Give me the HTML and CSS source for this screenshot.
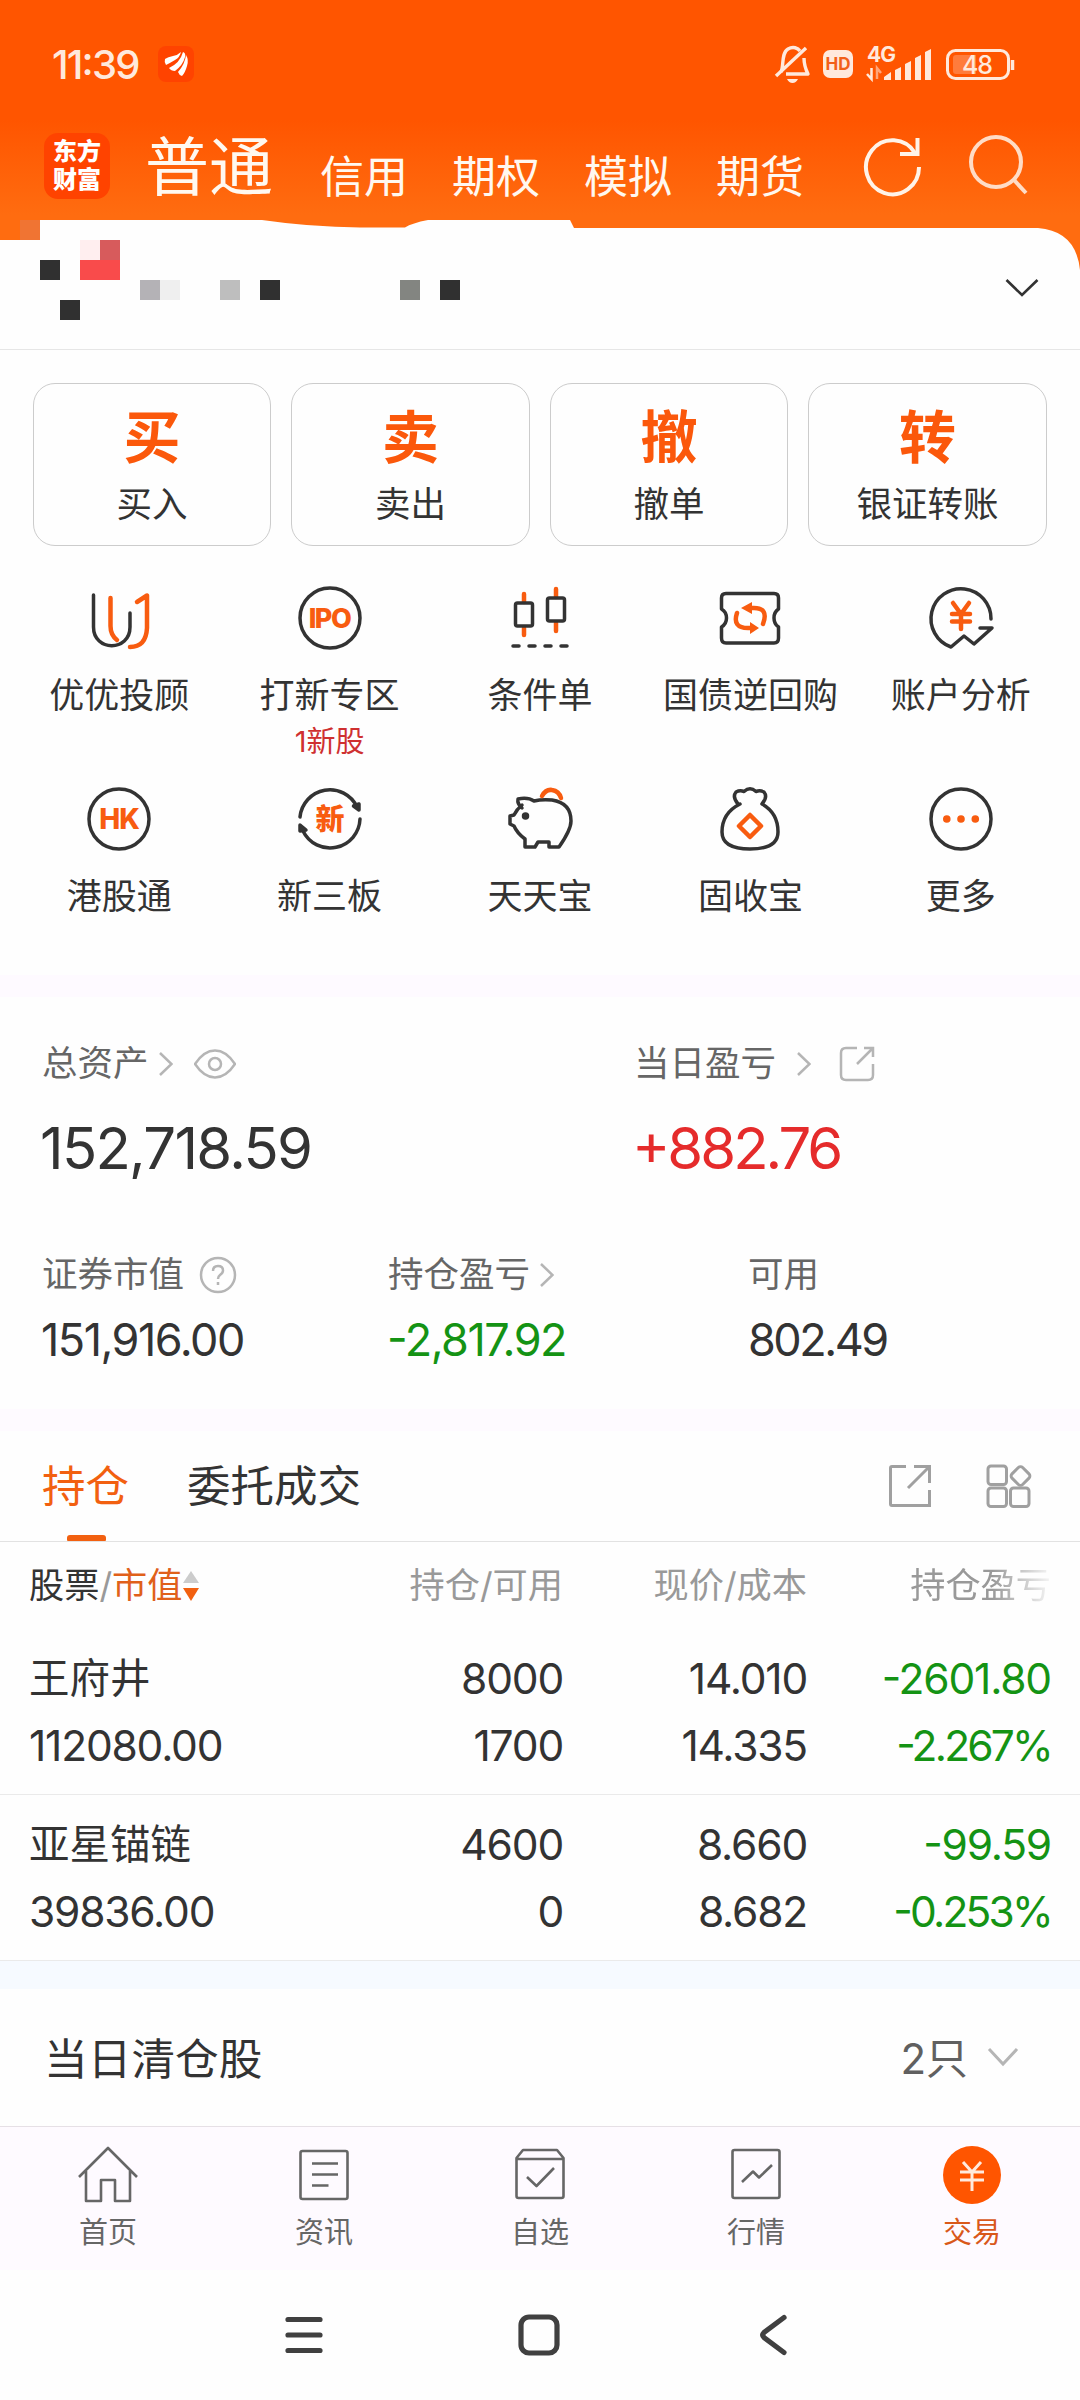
FILE: index.html
```html
<!DOCTYPE html>
<html lang="zh-CN">
<head>
    <meta charset="UTF-8">
    <meta name="viewport" content="width=device-width, initial-scale=1.0">
    <title>东方财富 - 交易</title>
    <link rel="stylesheet" href="styles.css">
</head>
<body>
    <div class="top">
        <div class="status-bar">
            <span class="time">11:39</span>
            <svg class="app-badge" width="36" height="36" viewBox="0 0 36 36">
                <rect width="36" height="36" rx="8" fill="#ff4300"/>
                <path d="M7 13 Q10 11 15 10 Q20 9 23 6 Q22 11 17 14 Q12 17 8 19 Q6 16 7 13Z M11 22 Q22 17 25 6 Q28 7 27 11 Q25 19 17 25 Q13 25 11 22Z M20 26 Q27 18 28 9 Q31 14 29 20 Q27 27 24 30 Q21 29 20 26Z" fill="#fff"/>
            </svg>
            <svg class="status-icons" width="242" height="52" viewBox="0 -6 242 52" fill="none" stroke="#ffe9dc" stroke-width="3.4">
                <path d="M7 28 C10 23 7 9 14 5 C19 2 24 4 26 7 M30 14 C30 21 31 24 34 30 H12" stroke-linejoin="round"/>
                <path d="M2 32 L32 4"/>
                <path d="M13 35 H24 Q22 39 18.500 39 Q15 39 13 35Z" fill="#ffe9dc" stroke="none"/>
                <rect x="49" y="6" width="30" height="28" rx="7" fill="#ffe9dc" stroke="none"/>
                <text x="64" y="26" class="hd">HD</text>
                <text x="93" y="18" class="net">4G</text>
                <path d="M97.500 24 V35 L93 30" stroke-width="2.500"/>
                <path d="M103 35 V24 L107 29" stroke="#ffa67a" stroke-width="2.500"/>
                <g fill="#ffe9dc" stroke="none">
                    <path d="M110 33 L117 28 V36 H110Z M121 26 L127 23 V36 H121Z M131 20 L137 17 V36 H131Z M141 14 L147 11 V36 H141Z M151 8 L157 5 V36 H151Z"/>
                </g>
                <rect x="173.500" y="6.500" width="61" height="28" rx="8" stroke-width="3"/>
                <path d="M182 11 H202 V30 H182 Q179 30 179 27 V14 Q179 11 182 11Z" fill="#ff7c3c" stroke="none"/>
                <path d="M238.500 16 V26" stroke-width="3.500"/>
                <text x="203" y="29.500" class="battery">48</text>
            </svg>
        </div>

        <div class="header">
            <div class="logo">东方<br>财富</div>
            <div class="account-tabs">
                <span class="active">普通</span>
                <span>信用</span>
                <span>期权</span>
                <span>模拟</span>
                <span>期货</span>
            </div>
            <svg width="60" height="64" viewBox="0 0 60 64" fill="none" stroke="#fff3e8" stroke-width="4">
                <path d="M52 20 A26.500 27 0 1 0 56 34"/>
                <path d="M37 21 H54.500 V5"/>
            </svg>
            <svg class="search" width="60" height="64" viewBox="0 0 60 64" fill="none" stroke="#ffdcc6" stroke-width="4">
                <circle cx="28" cy="29" r="25"/>
                <path d="M45.500 46.500 L58 60"/>
            </svg>
        </div>

        <!-- account row, name is masked with mosaic blocks -->
        <div class="account">
            <svg class="mask" width="1080" height="129" viewBox="0 0 1080 129">
                <path d="M0 20 H40 V0 H262 Q310 7 360 7.500 H405 Q412 3 428 0 H570 L574 8 H1038 Q1076 11 1080 50 V129 H0Z" fill="#fefefe"/>
                <rect x="20" y="0" width="20" height="20" fill="#f07433"/>
                <rect x="80" y="20" width="20" height="20" fill="#ffeeef"/>
                <rect x="100" y="20" width="20" height="20" fill="#d75b5c"/>
                <rect x="80" y="40" width="40" height="20" fill="#f94b4b"/>
                <rect x="140" y="60" width="20" height="20" fill="#b4b2b6"/>
                <rect x="160" y="60" width="20" height="20" fill="#efefef"/>
                <rect x="220" y="60" width="20" height="20" fill="#bebebe"/>
                <rect x="400" y="60" width="20" height="20" fill="#838581"/>
                <path d="M40 40h20v20h-20z M60 80h20v20h-20z M260 60h20v20h-20z M440 60h20v20h-20z" fill="#303030"/>
            </svg>
            <svg class="arrow" width="34" height="20" viewBox="0 0 34 20" fill="none" stroke="#333" stroke-width="2.600">
                <path d="M1.500 2 L17 17 L32.500 2"/>
            </svg>
        </div>
    </div>

    <div class="actions">
        <div class="action"><b>买</b><span>买入</span></div>
        <div class="action"><b>卖</b><span>卖出</span></div>
        <div class="action"><b>撤</b><span>撤单</span></div>
        <div class="action"><b>转</b><span>银证转账</span></div>
    </div>

    <div class="menu">
        <div class="item">
            <svg viewBox="0 0 64 64">
                <path d="M6.500 9 V41 C6.500 66 43 66 43 41 V27"/>
                <path class="o" d="M23.500 12 V40 Q23.500 49 30 54 M50 16 L60 9.500 V42 Q59 61 43 61"/>
            </svg>
            <span>优优投顾</span>
        </div>
        <div class="item">
            <svg viewBox="0 0 64 64">
                <circle cx="32" cy="32" r="30"/>
                <text x="31.500" y="42" class="ipo">IPO</text>
            </svg>
            <span>打新专区</span>
            <em>1新股</em>
        </div>
        <div class="item">
            <svg viewBox="0 0 64 64">
                <path class="o" d="M16 8 V16 M16 42 V49 M48 3 V11 M48 37 V45"/>
                <rect x="7.500" y="17" width="17" height="23" rx="2"/>
                <rect x="39.500" y="12" width="17" height="23" rx="2"/>
                <path d="M5 60 H11 M21 60 H27 M37 60 H43 M53 60 H59"/>
            </svg>
            <span>条件单</span>
        </div>
        <div class="item">
            <svg viewBox="0 0 64 64">
                <path d="M8 7.500 H56 Q60.500 7.500 60.500 12 V23 Q56 26 56 32 Q56 38 60.500 41 V52 Q60.500 57 56 57 H8 Q3.500 57 3.500 52 V41 Q8.500 38 8.500 32 Q8.500 26 3.500 23 V12 Q3.500 7.500 8 7.500Z"/>
                <path class="o" d="M19 27 Q14 42 30 42 H34 M45 38 Q51 22 36 22 H31"/>
                <path class="of" d="M23 22 L34 16 V28Z M41 42 L32 36 V48Z"/>
            </svg>
            <span>国债逆回购</span>
        </div>
        <div class="item">
            <svg viewBox="0 0 64 64">
                <path d="M62 33 A30 30 0 1 0 22 61 L35 50 L45 58 L63 42 H51"/>
                <path class="o" d="M24 17 L32 28 L40 17 M32 28 V43 M23 28 H41 M23 35.500 H41"/>
            </svg>
            <span>账户分析</span>
        </div>
        <div class="item">
            <svg viewBox="0 0 64 64">
                <circle cx="32" cy="32" r="30"/>
                <text x="32" y="42" class="hk">HK</text>
            </svg>
            <span>港股通</span>
        </div>
        <div class="item">
            <svg viewBox="0 0 64 64">
                <path d="M2 30 A30 30 0 0 1 59 20 M62 32 A30 30 0 0 1 5 44"/>
                <path d="M61 17 V23 L55.500 19Z M2 44 V38 L8 43Z" fill="#333"/>
                <text x="32" y="42.500" class="xin">新</text>
            </svg>
            <span>新三板</span>
        </div>
        <div class="item">
            <svg viewBox="0 0 64 64">
                <path d="M14 21 Q9 17 10 12 Q20 10 26 14 Q34 12 44 13 Q63 16 63 34 Q63 43 51 60 H41 V55 H30 L27 60 H17 V52 Q9 46 6 39 L2 37 V29 L6 28 Q9 22 14 18"/>
                <circle cx="17.500" cy="29" r="2" fill="#333"/>
                <path class="o" d="M34 9 Q38 2 44 3 Q51 4 53 11"/>
            </svg>
            <span>天天宝</span>
        </div>
        <div class="item">
            <svg viewBox="0 0 64 64">
                <path d="M20 17 Q14 10 18 5 Q22 3 26 4.500 Q32 -1 38 4.500 Q42 3 46 5 Q50 10 44 17 Q60 26 60 45 Q60 62 32 62 Q4 62 4 45 Q4 26 22 17"/>
                <path class="o" d="M32 28 L43 39 L32 50 L21 39Z"/>
            </svg>
            <span>固收宝</span>
        </div>
        <div class="item">
            <svg viewBox="0 0 64 64">
                <circle cx="32" cy="32" r="30"/>
                <path class="of" d="M14 32a3.800 3.800 0 1 0 7.600 0a3.800 3.800 0 1 0-7.600 0 M28.200 32a3.800 3.800 0 1 0 7.600 0a3.800 3.800 0 1 0-7.600 0 M42.500 32a3.800 3.800 0 1 0 7.600 0a3.800 3.800 0 1 0-7.600 0"/>
            </svg>
            <span>更多</span>
        </div>
    </div>

    <div class="gap"></div>

    <div class="assets">
        <div class="assets-main">
            <div>
                <div class="label">总资产
                    <svg class="chev" width="14" height="24" viewBox="0 0 14 24"><path d="M1 1 L12.500 12 L1 23"/></svg>
                    <svg class="eye" width="42" height="30" viewBox="0 0 42 30">
                        <path d="M1 15 Q10 1.500 21 1.500 Q32 1.500 41 15 Q32 28.500 21 28.500 Q10 28.500 1 15Z"/>
                        <circle cx="21" cy="15" r="6"/>
                    </svg>
                </div>
                <div class="total">152,718.59</div>
            </div>
            <div>
                <div class="label">当日盈亏
                    <svg class="chev far" width="14" height="24" viewBox="0 0 14 24"><path d="M1 1 L12.500 12 L1 23"/></svg>
                    <svg class="share" width="36" height="36" viewBox="0 0 36 36">
                        <path d="M18 2 H7 Q2 2 2 7 V29 Q2 34 7 34 H29 Q34 34 34 29 V18 M25 2 H34 V11 M34 2 L18 18"/>
                    </svg>
                </div>
                <div class="total profit up">+882.76</div>
            </div>
        </div>
        <div class="assets-sub">
            <div>
                <div class="label">证券市值
                    <svg class="help" width="38" height="38" viewBox="0 0 38 38">
                        <circle cx="19" cy="19" r="17"/>
                        <path d="M14 15 Q14 10 19 10 Q24 10 24 14.500 Q24 17 21 19 Q19 20.500 19 23 M19 26 V29"/>
                    </svg>
                </div>
                <div class="value">151,916.00</div>
            </div>
            <div>
                <div class="label">持仓盈亏
                    <svg class="chev" width="14" height="24" viewBox="0 0 14 24"><path d="M1 1 L12.500 12 L1 23"/></svg>
                </div>
                <div class="value down">-2,817.92</div>
            </div>
            <div>
                <div class="label">可用</div>
                <div class="value short">802.49</div>
            </div>
        </div>
    </div>

    <div class="gap"></div>

    <div class="tabs">
        <span class="tab active">持仓</span>
        <span class="tab">委托成交</span>
        <svg class="tab-share" width="44" height="44" viewBox="0 0 44 44">
            <path d="M18 2.500 H4 Q2.500 2.500 2.500 4 V40 Q2.500 41.500 4 41.500 H41.500 V26 M26 2.500 H41.500 V19 M41.500 2.500 L20 24"/>
        </svg>
        <svg width="46" height="46" viewBox="0 0 46 46">
            <rect x="2" y="3" width="18.500" height="18.500" rx="3"/>
            <rect x="2" y="25" width="18.500" height="18.500" rx="3"/>
            <rect x="24.500" y="25" width="18.500" height="18.500" rx="3"/>
            <rect x="27" y="5.500" width="15" height="15" rx="3" transform="rotate(45 34.500 13)"/>
        </svg>
    </div>

    <div class="holdings">
        <div class="row head">
            <span class="sort"><i>股票</i>/<strong>市值</strong><svg width="17" height="32" viewBox="0 0 17 32"><path d="M1 13 L9 1 L17 13Z" fill="#ccc"/><path d="M1 18 H17 L9 31Z" fill="#f26010"/></svg></span>
            <span>持仓/可用</span>
            <span>现价/成本</span>
            <span class="fade">持仓盈亏</span>
        </div>
        <div class="row stock">
            <span>王府井</span><span>8000</span><span>14.010</span><span class="down">-2601.80</span>
            <span>112080.00</span><span>1700</span><span>14.335</span><span class="down rate">-2.267%</span>
        </div>
        <div class="row stock">
            <span>亚星锚链</span><span>4600</span><span>8.660</span><span class="down">-99.59</span>
            <span>39836.00</span><span>0</span><span>8.682</span><span class="down rate">-0.253%</span>
        </div>
    </div>

    <div class="gap blue"></div>

    <div class="cleared">
        <span>当日清仓股</span>
        <span class="count">2只</span>
        <svg width="32" height="20" viewBox="0 0 32 20" fill="none" stroke="#b5b5b5" stroke-width="3"><path d="M2 2 L16 17 L30 2"/></svg>
    </div>

    <div class="nav">
        <div class="nav-item">
            <svg viewBox="0 0 60 60"><path d="M1 32 L30 3 L59 32 M8 26 V56 H23 V35 H37 V56 H52 V26"/></svg>
            <span>首页</span>
        </div>
        <div class="nav-item">
            <svg viewBox="0 0 60 60"><rect x="6.500" y="6" width="47" height="48" rx="2"/><path d="M18 18.500 H44 M18 29.500 H44 M18 40.500 H34.500"/></svg>
            <span>资讯</span>
        </div>
        <div class="nav-item">
            <svg viewBox="0 0 60 60"><path d="M6.500 13 L13 5 H47 L53.500 13 V51 Q53.500 53 51.500 53 H8.500 Q6.500 53 6.500 51Z M6.500 14 H53.500 M17 32 L26.500 41 L44 23"/></svg>
            <span>自选</span>
        </div>
        <div class="nav-item">
            <svg viewBox="0 0 60 60"><rect x="6.500" y="5" width="47" height="48" rx="2"/><path d="M16 37 L27 26.500 L33 32.500 L46 20"/></svg>
            <span>行情</span>
        </div>
        <div class="nav-item active">
            <svg viewBox="0 0 60 60"><circle cx="30" cy="30" r="29"/><path d="M21 17 L30 27 L39 17 M30 27 V46 M18 27 H42 M18 35 H42"/></svg>
            <span>交易</span>
        </div>
    </div>

    <!-- android navigation keys -->
    <div class="system-keys">
        <svg width="44" height="44" viewBox="0 0 44 44"><path d="M5 6.500 H37 M5 22 H37 M5 37.500 H37"/></svg>
        <svg width="44" height="44" viewBox="0 0 44 44"><rect x="4" y="4" width="36" height="36" rx="8"/></svg>
        <svg width="44" height="44" viewBox="0 0 44 44"><path d="M33 4.500 L13 19.500 Q10.500 22 13 24.500 L33 39.500"/></svg>
    </div>
</body>
</html>
```

FILE: styles.css
```css
* {
    margin: 0;
    padding: 0;
    box-sizing: border-box;
}
body {
    width: 1080px;
    height: 2400px;
    font-family: Inter, 'Noto Sans CJK SC', sans-serif;
    font-feature-settings: 'case'; /* lifts the minus sign to digit height */
    background-color: #fefefe;
    color: #333;
    overflow: hidden;
}
svg {
    display: block;
    flex-shrink: 0;
}
.top {
    height: 350px;
    background: linear-gradient(#ff5500 0, #ff5500 120px, #ff6c10 215px);
    border-bottom: 1px solid #e6e6e6;
}

/* Status bar */
.status-bar {
    display: flex;
    align-items: center;
    height: 130px;
    padding: 0 64px 2px 52px;
    color: #ffe9dc;
}
.time {
    width: 106px;
    font-size: 40px;
    font-weight: 500;
    letter-spacing: -1.800px;
}
.status-icons {
    margin-left: auto;
}
.status-icons text {
    font-weight: 700;
    stroke: none;
}
.hd {
    font-size: 17px;
    text-anchor: middle;
    fill: #f26018;
}
.net {
    font-size: 21px;
    letter-spacing: -1px;
    fill: #ffe9dc;
}
.status-icons .battery {
    font-size: 25px;
    font-weight: 500;
    letter-spacing: -1px;
    text-anchor: middle;
    fill: #ffe9dc;
}

/* Header */
.header {
    display: flex;
    height: 90px;
    padding: 3px 0 0 44px;
}
.logo {
    width: 66px;
    height: 66px;
    padding-top: 5px;
    border-radius: 14px;
    background-color: #ff4300;
    color: #fff;
    font-size: 24px;
    font-weight: 900;
    line-height: 28px;
    text-align: center;
}
.account-tabs {
    display: flex;
    align-items: baseline;
    gap: 44px;
    width: 753px;
    padding: 3px 0 0 35px;
    color: #fff8f0;
    font-size: 44px;
    line-height: 68px;
}
.account-tabs .active {
    margin-right: 3px;
    font-size: 64px;
    transform: translateY(-3px);
}
.search {
    margin-left: 45px;
}

/* Account */
.account {
    position: relative;
    height: 129px;
}
.mask {
    position: absolute;
    top: 0;
    left: 0;
}
.arrow {
    position: absolute;
    top: 58px;
    right: 41px;
}

/* Trade buttons */
.actions {
    display: grid;
    grid-template-columns: 238px 239px 238px 239px;
    gap: 20px;
    padding: 33px 33px 0;
}
.action {
    display: flex;
    flex-direction: column;
    align-items: center;
    height: 163px;
    padding-top: 21px;
    border: 1px solid #ccc;
    border-radius: 22px;
}
.action b {
    color: #fb580b;
    font-size: 57px;
    line-height: 66px;
}
.action span {
    margin-top: 10px;
    font-size: 35.500px;
    line-height: 48px;
}

/* Menu */
.menu {
    display: grid;
    grid-template-columns: repeat(5, 1fr);
    grid-auto-rows: 201px;
    height: 429px;
    padding: 40px 14px 0;
}
.item {
    display: flex;
    flex-direction: column;
    align-items: center;
}
.item svg {
    width: 64px;
    height: 64px;
    fill: none;
    stroke: #333;
    stroke-width: 3.500;
    stroke-linecap: round;
    stroke-linejoin: round;
    overflow: visible;
}
.item .o {
    stroke: #f85c10;
    stroke-width: 4.500;
}
.item .of {
    fill: #f85c10;
    stroke: none;
}
.item text {
    fill: #f85c10;
    stroke: none;
    font-weight: 800;
    text-anchor: middle;
}
.ipo {
    font-size: 27px;
    letter-spacing: -1.500px;
}
.hk {
    font-size: 28px;
    letter-spacing: -1px;
}
.xin {
    font-size: 29px;
}
.item span {
    margin-top: 21px;
    font-size: 35px;
    line-height: 48px;
}
.item em {
    color: #cf3030;
    font-size: 29px;
    font-style: normal;
    line-height: 45px;
}

.gap {
    height: 22px;
    background-color: #fefaff;
}

/* Assets */
.assets {
    height: 412px;
    padding: 43px 42px 0;
}
.label {
    display: flex;
    align-items: center;
    height: 48px;
    color: #666;
    font-size: 35.500px;
    line-height: 48px;
}
.label svg {
    fill: none;
    stroke: #b5b5b5;
    stroke-width: 2.500;
}
.chev {
    margin-left: 10px;
}
.chev.far {
    margin-left: 21px;
}
.eye {
    margin-left: 21px;
}
.share {
    margin-left: 28px;
}
.help {
    margin-left: 15px;
}
.assets-main {
    display: grid;
    grid-template-columns: 592px 1fr;
    height: 211px;
}
.total {
    margin: 25px 0 0 -2px;
    font-size: 58px;
    line-height: 70px;
    letter-spacing: -1.700px;
}
.total.profit {
    letter-spacing: -3px;
}
.up {
    color: #e52b2b;
}
.down {
    color: #149314;
}
.assets-sub {
    display: grid;
    grid-template-columns: 346px 360px 1fr;
}
.value {
    margin: 13px 0 0 -1px;
    font-size: 45px;
    line-height: 56px;
    letter-spacing: -1.500px;
}
.value.short {
    margin-left: 0;
    letter-spacing: -2.500px;
}

/* Tabs */
.tabs {
    display: flex;
    align-items: center;
    height: 111px;
    padding: 0 48px 0 42px;
    border-bottom: 1px solid #e2e2e2;
}
.tab {
    position: relative;
    margin-right: 58px;
    font-size: 43.500px;
    line-height: 110px;
}
.tab.active {
    color: #f26010;
}
.tab.active::after {
    content: '';
    position: absolute;
    left: 25px;
    bottom: 0;
    width: 39px;
    height: 6px;
    border-radius: 3px 3px 1px 1px;
    background-color: #f26010;
}
.tabs svg {
    fill: none;
    stroke: #a0a0a0;
    stroke-width: 3;
}
.tab-share {
    margin: 0 54px 0 auto;
}

/* Holdings */
.row {
    display: grid;
    grid-template-columns: 290px 244px 244px 244px;
    padding: 0 29px;
    text-align: right;
}
.row span:nth-child(4n + 1) {
    text-align: left;
}
.head {
    height: 87px;
    color: #999;
    font-size: 35.200px;
    line-height: 87px;
}
.sort {
    display: flex;
    align-items: center;
}
.sort i {
    color: #333;
    font-style: normal;
}
.sort strong {
    color: #e0601a;
    font-weight: 400;
}
.fade {
    -webkit-mask-image: linear-gradient(90deg, #000 76%, transparent 102%);
    mask-image: linear-gradient(90deg, #000 76%, transparent 102%);
}
.stock {
    height: 166px;
    padding-top: 16px;
    border-bottom: 1px solid #eaeaea;
    font-size: 42.500px;
    line-height: 67px;
    grid-auto-rows: 67px;
    letter-spacing: -1.200px;
}
.stock span:first-child {
    font-size: 40.500px;
    letter-spacing: 0;
}
.stock .rate {
    letter-spacing: -2.800px;
}
.gap.blue {
    height: 28px;
    background-color: #f6faff;
}

/* Cleared today */
.cleared {
    display: flex;
    align-items: center;
    height: 137px;
    padding: 0 61px 4px 44px;
    font-size: 43.700px;
}
.count {
    margin: 0 19px 0 auto;
    color: #606060;
    font-size: 42px;
}
.cleared svg {
    margin-top: 3px;
}

/* Bottom navigation */
.nav {
    display: grid;
    grid-template-columns: repeat(5, 1fr);
    height: 144px;
    padding-top: 18px;
    border-top: 1px solid #e6e0e6;
    background-color: #fefaff;
    color: #666;
}
.nav-item {
    display: flex;
    flex-direction: column;
    align-items: center;
    font-size: 29px;
    line-height: 40px;
}
.nav-item svg {
    width: 60px;
    height: 60px;
    margin-bottom: 8px;
    fill: none;
    stroke: #666;
    stroke-width: 2.600;
    stroke-linejoin: round;
}
.nav-item.active {
    color: #d9581a;
}
.nav-item.active circle {
    fill: #ff5500;
    stroke: none;
}
.nav-item.active path {
    stroke: #ffeadd;
    stroke-width: 3;
}

.system-keys {
    display: flex;
    justify-content: center;
    align-items: center;
    gap: 190px;
    height: 130px;
    padding-right: 2px;
}
.system-keys svg {
    fill: none;
    stroke: #404040;
    stroke-width: 5.200;
    stroke-linecap: round;
}
```
